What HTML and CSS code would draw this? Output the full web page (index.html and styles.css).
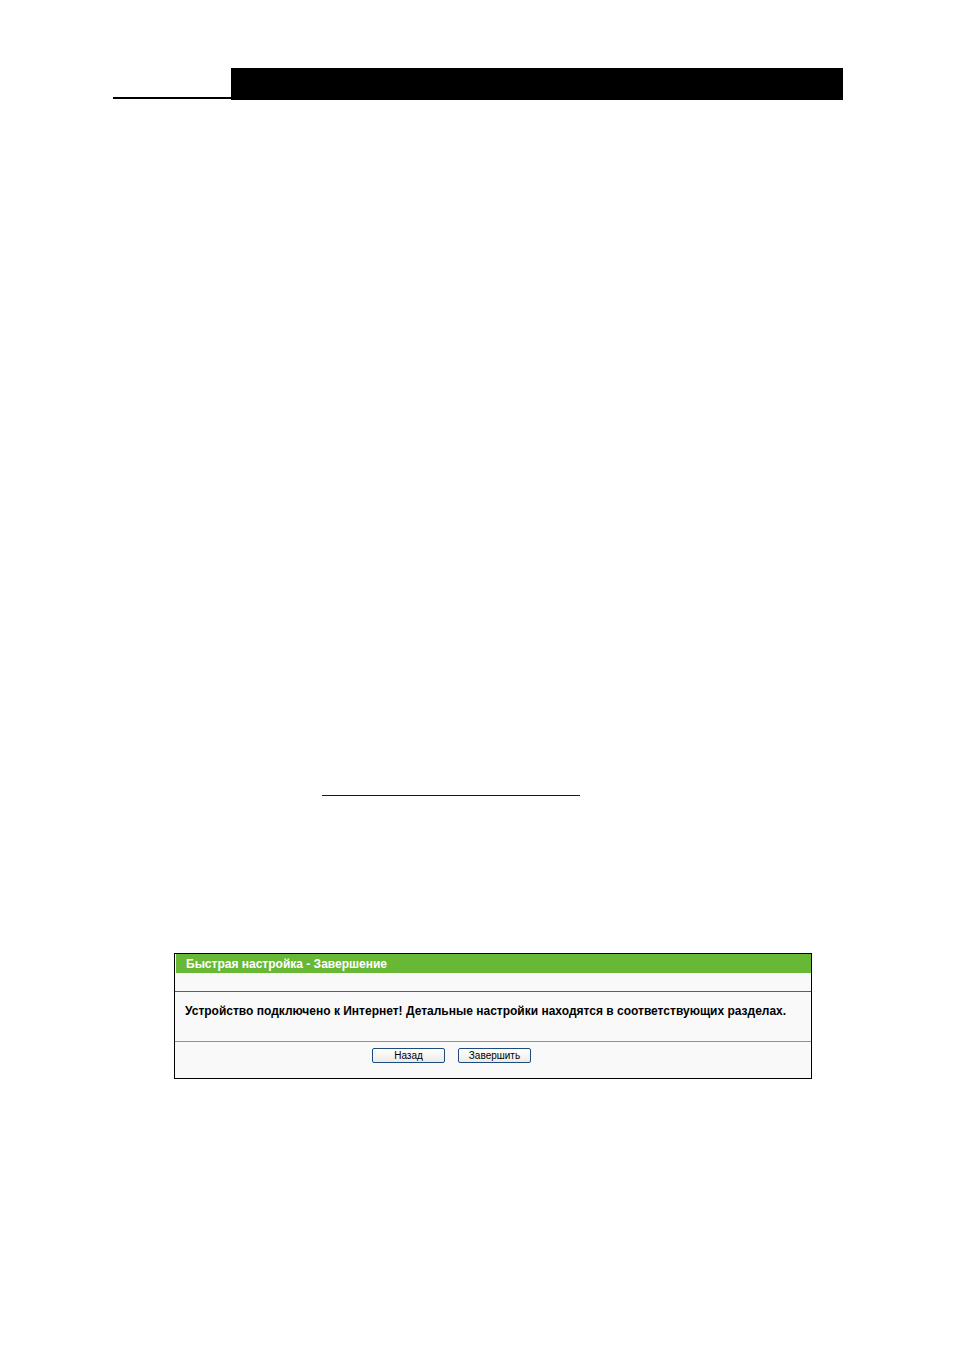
FILE: index.html
```html
<!DOCTYPE html>
<html>
<head>
    <title>Быстрая настройка - Завершение</title>
    <link rel="stylesheet" href="styles.css">
</head>
<body>

<div class="pagehead">
    <div class="headrule"></div>
    <div class="headbar"></div>
</div>

<div class="linkline"><a class="blank" href="#"></a></div>

<div class="panel">
    <div class="title">Быстрая настройка - Завершение</div>
    <div class="blankrow"></div>
    <div class="message">Устройство подключено к Интернет! Детальные настройки находятся в соответствующих разделах.</div>
    <div class="buttons">
        <button type="button" class="btn">Назад</button>
        <button type="button" class="btn">Завершить</button>
    </div>
</div>

</body>
</html>
```

FILE: styles.css
```css
BODY {
    margin : 0;
    background-color : #fff;
    font-family : tahoma, "DejaVu Sans", "Liberation Sans", sans-serif;
}

.pagehead {
    display : flex;
    align-items : flex-end;
    margin : 68px 0 0 113px;
    width : 730px;
}
.headrule {
    width : 118px;
    height : 2px;
    margin-bottom : 1px;
    background-color : #000;
}
.headbar {
    flex : 1;
    height : 32px;
    background-color : #000;
}

.linkline {
    margin : 695px 0 0 322px;
    height : 1px;
}
.blank {
    display : block;
    width : 258px;
    height : 1px;
    background-color : #0000dd;
}

.panel {
    margin : 157px 0 0 174px;
    width : 636px;
    border : 1px solid #000;
    background-color : #f9f9f9;
    font-family : "Liberation Sans", arial, sans-serif;
    font-size : 12px;
}
.title {
    height : 19px;
    line-height : 20px;
    padding-left : 10px;
    margin-left : 1px;
    background-color : #67b935;
    color : #fff;
    font-weight : bold;
}
.blankrow {
    height : 18px;
    border-bottom : 1px solid #2b7a4b;
}
.message {
    height : 49px;
    padding-left : 10px;
    padding-top : 2px;
    box-sizing : border-box;
    height : 50px;
    line-height : 34px;
    font-weight : bold;
    color : #000;
    border-bottom : 1px solid #6aa882;
}
.buttons {
    height : 36px;
    display : flex;
    gap : 13px;
    padding : 6px 0 0 197px;
    box-sizing : border-box;
}
.btn {
    width : 73px;
    height : 15px;
    padding : 0;
    border : 1px solid #1d4c7c;
    border-radius : 2px;
    background : linear-gradient(#ffffff, #ecebe6);
    font-family : "Liberation Sans", arial, sans-serif;
    font-size : 10px;
    line-height : 13px;
    color : #000;
}
```
